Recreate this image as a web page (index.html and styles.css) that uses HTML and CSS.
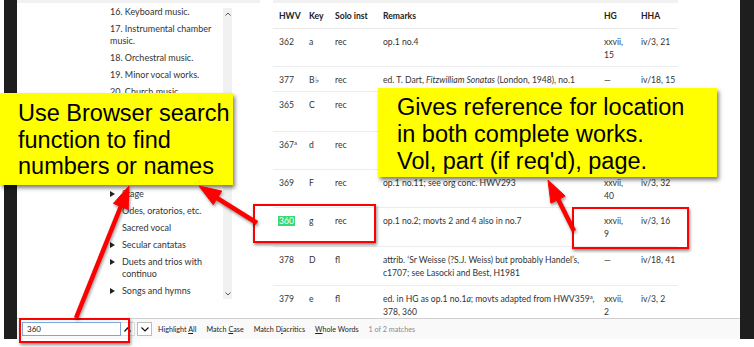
FILE: index.html
```html
<!DOCTYPE html>
<html lang="en">
<head>
    <meta charset="UTF-8">
    <meta name="viewport" content="width=device-width, initial-scale=1.0">
    <title>Handel works - sonatas for solo instrument</title>
    <link rel="stylesheet" href="styles.css">
</head>
<body>
<div class="shot">
    <div class="screen">
        <div class="window">
            <div class="page">
                <aside class="sidebar">
                    <div class="toc">
                        <ul class="toc-list">
                            <li><span>16. Keyboard music.</span></li>
                            <li><span>17. Instrumental chamber music.</span></li>
                            <li><span>18. Orchestral music.</span></li>
                            <li><span>19. Minor vocal works.</span></li>
                            <li><span>20. Church music</span></li>
                            <li><span>21. English oratorios.</span></li>
                            <li><span>22. Reputation.</span></li>
                            <li class="toc-group"><span>Works</span></li>
                            <li><span class="arrow"></span><span>Operas</span></li>
                            <li><span class="arrow"></span><span>Incidental music</span></li>
                            <li><span class="arrow"></span><span>Stage</span></li>
                            <li><span class="no-arrow"></span><span>Odes, oratorios, etc.</span></li>
                            <li><span class="no-arrow"></span><span>Sacred vocal</span></li>
                            <li><span class="arrow"></span><span>Secular cantatas</span></li>
                            <li><span class="arrow"></span><span>Duets and trios with continuo</span></li>
                            <li><span class="arrow"></span><span>Songs and hymns</span></li>
                        </ul>
                        <div class="scrollbar">
                            <svg width="6" height="4" viewBox="0 0 6 4"><polyline points="0.5,3.5 3,1 5.5,3.5" fill="none" stroke="#555" stroke-width="1"/></svg>
                            <svg width="6" height="4" viewBox="0 0 6 4"><polyline points="0.5,0.5 3,3 5.5,0.5" fill="none" stroke="#555" stroke-width="1"/></svg>
                        </div>
                    </div>
                </aside>

                <main class="main">
                    <table class="works">
                        <colgroup>
                            <col class="col-hwv">
                            <col class="col-key">
                            <col class="col-solo">
                            <col class="col-remarks">
                            <col class="col-hg">
                            <col class="col-hha">
                        </colgroup>
                        <thead>
                            <tr><th>HWV</th><th>Key</th><th>Solo inst</th><th>Remarks</th><th>HG</th><th>HHA</th></tr>
                        </thead>
                        <tbody>
                            <tr><td>362</td><td>a</td><td>rec</td><td>op.1 no.4</td><td>xxvii,<br>15</td><td>iv/3, 21</td></tr>
                            <tr><td>377</td><td>B&#9837;</td><td>rec</td><td>ed. T. Dart, <i>Fitzwilliam Sonatas</i> (London, 1948), no.1</td><td>&mdash;</td><td>iv/18, 15</td></tr>
                            <tr class="row-tall"><td>365</td><td>C</td><td>rec</td><td>op.1 no.7</td><td>xxvii,<br>30</td><td>iv/3, 24</td></tr>
                            <tr><td>367<sup>a</sup></td><td>d</td><td>rec</td><td>op.1 no.9; see also HWV367b</td><td>xxvii,<br>34</td><td>iv/3, 28</td></tr>
                            <tr><td>369</td><td>F</td><td>rec</td><td>op.1 no.11; see org conc. HWV293</td><td>xxvii,<br>40</td><td>iv/3, 32</td></tr>
                            <tr class="row-mid"><td><mark class="hit">360</mark></td><td>g</td><td>rec</td><td>op.1 no.2; movts 2 and 4 also in no.7</td><td>xxvii,<br>9</td><td>iv/3, 16</td></tr>
                            <tr class="row-mid"><td>378</td><td>D</td><td>fl</td><td>attrib. &lsquo;Sr Weisse (?S.J. Weiss) but probably Handel&rsquo;s,<br>c1707; see Lasocki and Best, H1981</td><td>&mdash;</td><td>iv/18, 41</td></tr>
                            <tr><td>379</td><td>e</td><td>fl</td><td>ed. in HG as op.1 no.1<i>a</i>; movts adapted from HWV359<sup>a</sup>,<br>378, 360</td><td>xxvii,<br>2</td><td>iv/3, 2</td></tr>
                        </tbody>
                    </table>
                </main>
            </div>

            <div class="findbar">
                <input class="find-input" type="text" value="360" readonly>
                <span class="find-btn find-up">
                    <svg width="7" height="5" viewBox="0 0 7 5"><polyline points="0.5,4.5 3.5,1 6.5,4.5" fill="none" stroke="#111" stroke-width="1.2"/></svg>
                </span>
                <span class="find-btn find-down">
                    <svg width="8" height="5" viewBox="0 0 8 5"><polyline points="0.5,0.5 4,4 7.5,0.5" fill="none" stroke="#111" stroke-width="1.2"/></svg>
                </span>
                <span class="find-opt first">Highlight <u>A</u>ll</span>
                <span class="find-opt">Match <u>C</u>ase</span>
                <span class="find-opt">Match D<u>i</u>acritics</span>
                <span class="find-opt"><u>W</u>hole Words</span>
                <span class="find-opt find-count">1 of 2 matches</span>
            </div>
        </div>
    </div>

    <!-- annotations drawn over the screenshot -->
    <div class="note note-search">Use Browser search<br>function to find<br>numbers or names</div>
    <div class="note note-refs">Gives reference for location<br>in both complete works.<br>Vol, part (if req'd), page.</div>

    <div class="callout callout-hwv"></div>
    <div class="callout callout-hg"></div>
    <div class="callout callout-input"></div>

    <svg class="arrows" width="754" height="347" viewBox="0 0 754 347">
        <g fill="#f00" stroke="#f00">
            <line x1="76" y1="318" x2="121" y2="206" stroke-width="4.5"/>
            <polygon points="129,186 128.2,209.4 113.4,203.4" stroke-width="1"/>
            <line x1="257" y1="223" x2="217" y2="198" stroke-width="4.5"/>
            <polygon points="199,186 221.8,191.1 213.2,204.6" stroke-width="1"/>
            <line x1="574" y1="231" x2="558" y2="199" stroke-width="4.5"/>
            <polygon points="548,180 565.1,196 550.9,203.2" stroke-width="1"/>
        </g>
    </svg>
</div>
</body>
</html>
```

FILE: styles.css
```css
body {
    margin: 0;
    background-color: #fff;
}

.shot {
    position: relative;
    width: 754px;
    height: 347px;
    overflow: hidden;
}

.screen {
    margin-left: 4px;
    width: 750px;
    height: 339px;
    padding: 0 14px 0 13px;
    box-sizing: border-box;
    background-color: #1e1e1e;
}

.window {
    height: 100%;
    display: flex;
    flex-direction: column;
    background-color: #fff;
    font-family: Lato, "Liberation Sans", sans-serif;
    color: #333;
}

.page {
    flex: 1;
    min-height: 0;
    display: flex;
    overflow: hidden;
}

/* sidebar contents list */
.sidebar {
    width: 243px;
    flex: none;
    padding-left: 88px;
    box-sizing: border-box;
    border-top: 3px solid #f1f1f1;
}

.toc {
    display: flex;
    width: 128px;
}

.toc-list {
    flex: 1;
    list-style: none;
    margin: 0;
    padding: 3px 0 0 5px;
    font-size: 9px;
    line-height: 12px;
}

.toc-list li {
    display: flex;
    margin-bottom: 5px;
}

.toc-list .toc-group {
    margin-top: 5px;
}

.arrow, .no-arrow {
    flex: none;
    width: 12px;
}

.arrow::before {
    content: "";
    display: inline-block;
    margin-top: 2.5px;
    border-left: 5px solid #222;
    border-top: 3.5px solid transparent;
    border-bottom: 3.5px solid transparent;
}

.scrollbar {
    flex: none;
    width: 9px;
    height: 291px;
    margin: 5px 1px 0 0;
    padding: 4px 0 3px;
    box-sizing: border-box;
    background-color: #f1f1f1;
    display: flex;
    flex-direction: column;
    justify-content: space-between;
    align-items: center;
}

/* works table */
.main {
    width: 405px;
    flex: none;
    margin-left: 13px;
    border-top: 3px solid #f1f1f1;
}

.works {
    width: 405px;
    table-layout: fixed;
    border-collapse: collapse;
    font-size: 8.6px;
    line-height: 13px;
}

.col-hwv { width: 30px; }
.col-key { width: 26px; }
.col-solo { width: 48px; }
.col-remarks { width: 221px; }
.col-hg { width: 37px; }
.col-hha { width: 43px; }

.works th {
    text-align: left;
    font-weight: 700;
    color: #222;
    padding: 7px 6px 5px;
    border-bottom: 1px solid #e8e8e8;
    white-space: nowrap;
}

.works td {
    padding: 7px 6px 4px;
    vertical-align: top;
    border-bottom: 1px solid #ebebf0;
    white-space: nowrap;
}

.works .row-tall td {
    padding-bottom: 6px;
}

.works .row-mid td {
    padding-bottom: 5px;
}

.works td:last-child, .works th:last-child {
    padding-right: 0;
}

.works sup {
    font-size: 6px;
    line-height: 0;
    vertical-align: 3px;
}

.hit {
    background-color: #38d878;
    color: #fff;
    padding: 0 1px;
    margin-left: -1px;
}

/* find bar */
.findbar {
    flex: none;
    height: 21px;
    box-sizing: border-box;
    display: flex;
    align-items: center;
    padding-left: 5px;
    border-top: 1px solid #cfcfd3;
    background-color: #f9f9fa;
    font-size: 7.2px;
    color: #1f1f1f;
}

.find-input {
    width: 99px;
    height: 14px;
    margin: 0;
    padding: 0 0 0 4px;
    box-sizing: border-box;
    border: 1px solid #7ea6d8;
    font-family: Lato, "Liberation Sans", sans-serif;
    font-size: 8px;
    color: #222;
    background-color: #fff;
    outline: none;
}

.find-btn {
    height: 14px;
    box-sizing: border-box;
    display: flex;
    align-items: center;
    justify-content: center;
    background-color: #fff;
}

.find-up {
    width: 14px;
    border: 1px solid #dcdcdc;
    border-left: none;
}

.find-down {
    width: 15px;
    margin-left: 2px;
    border: 1px solid #bdbdbd;
}

.find-opt {
    margin-left: 10px;
    white-space: nowrap;
}

.find-opt.first {
    margin-left: 6px;
}

.find-count {
    color: #8a8a8a;
}

/* annotations */
.note {
    position: absolute;
    box-sizing: border-box;
    background-color: #ff0;
    color: #000;
    font-family: "Liberation Sans", Arial, sans-serif;
    font-size: 23.5px;
    white-space: nowrap;
    box-shadow: 2px 3px 4px rgba(0, 0, 0, 0.5);
}

.note-search {
    left: 0;
    top: 93px;
    width: 233px;
    height: 92px;
    padding: 7px 0 0 18px;
    line-height: 26.5px;
}

.note-refs {
    left: 378px;
    top: 88px;
    width: 339px;
    height: 89px;
    padding: 6px 0 0 19px;
    line-height: 27px;
}

.callout {
    position: absolute;
    box-sizing: border-box;
    border: 2px solid #f00;
    box-shadow: 1px 2px 3px rgba(0, 0, 0, 0.45);
}

.callout-hwv {
    left: 253px;
    top: 204px;
    width: 123px;
    height: 39px;
}

.callout-hg {
    left: 572px;
    top: 207px;
    width: 117px;
    height: 42px;
}

.callout-input {
    left: 19px;
    top: 318px;
    width: 111px;
    height: 25px;
}

.arrows {
    position: absolute;
    left: 0;
    top: 0;
    pointer-events: none;
    filter: drop-shadow(1px 2px 1.5px rgba(0, 0, 0, 0.4));
}
```
